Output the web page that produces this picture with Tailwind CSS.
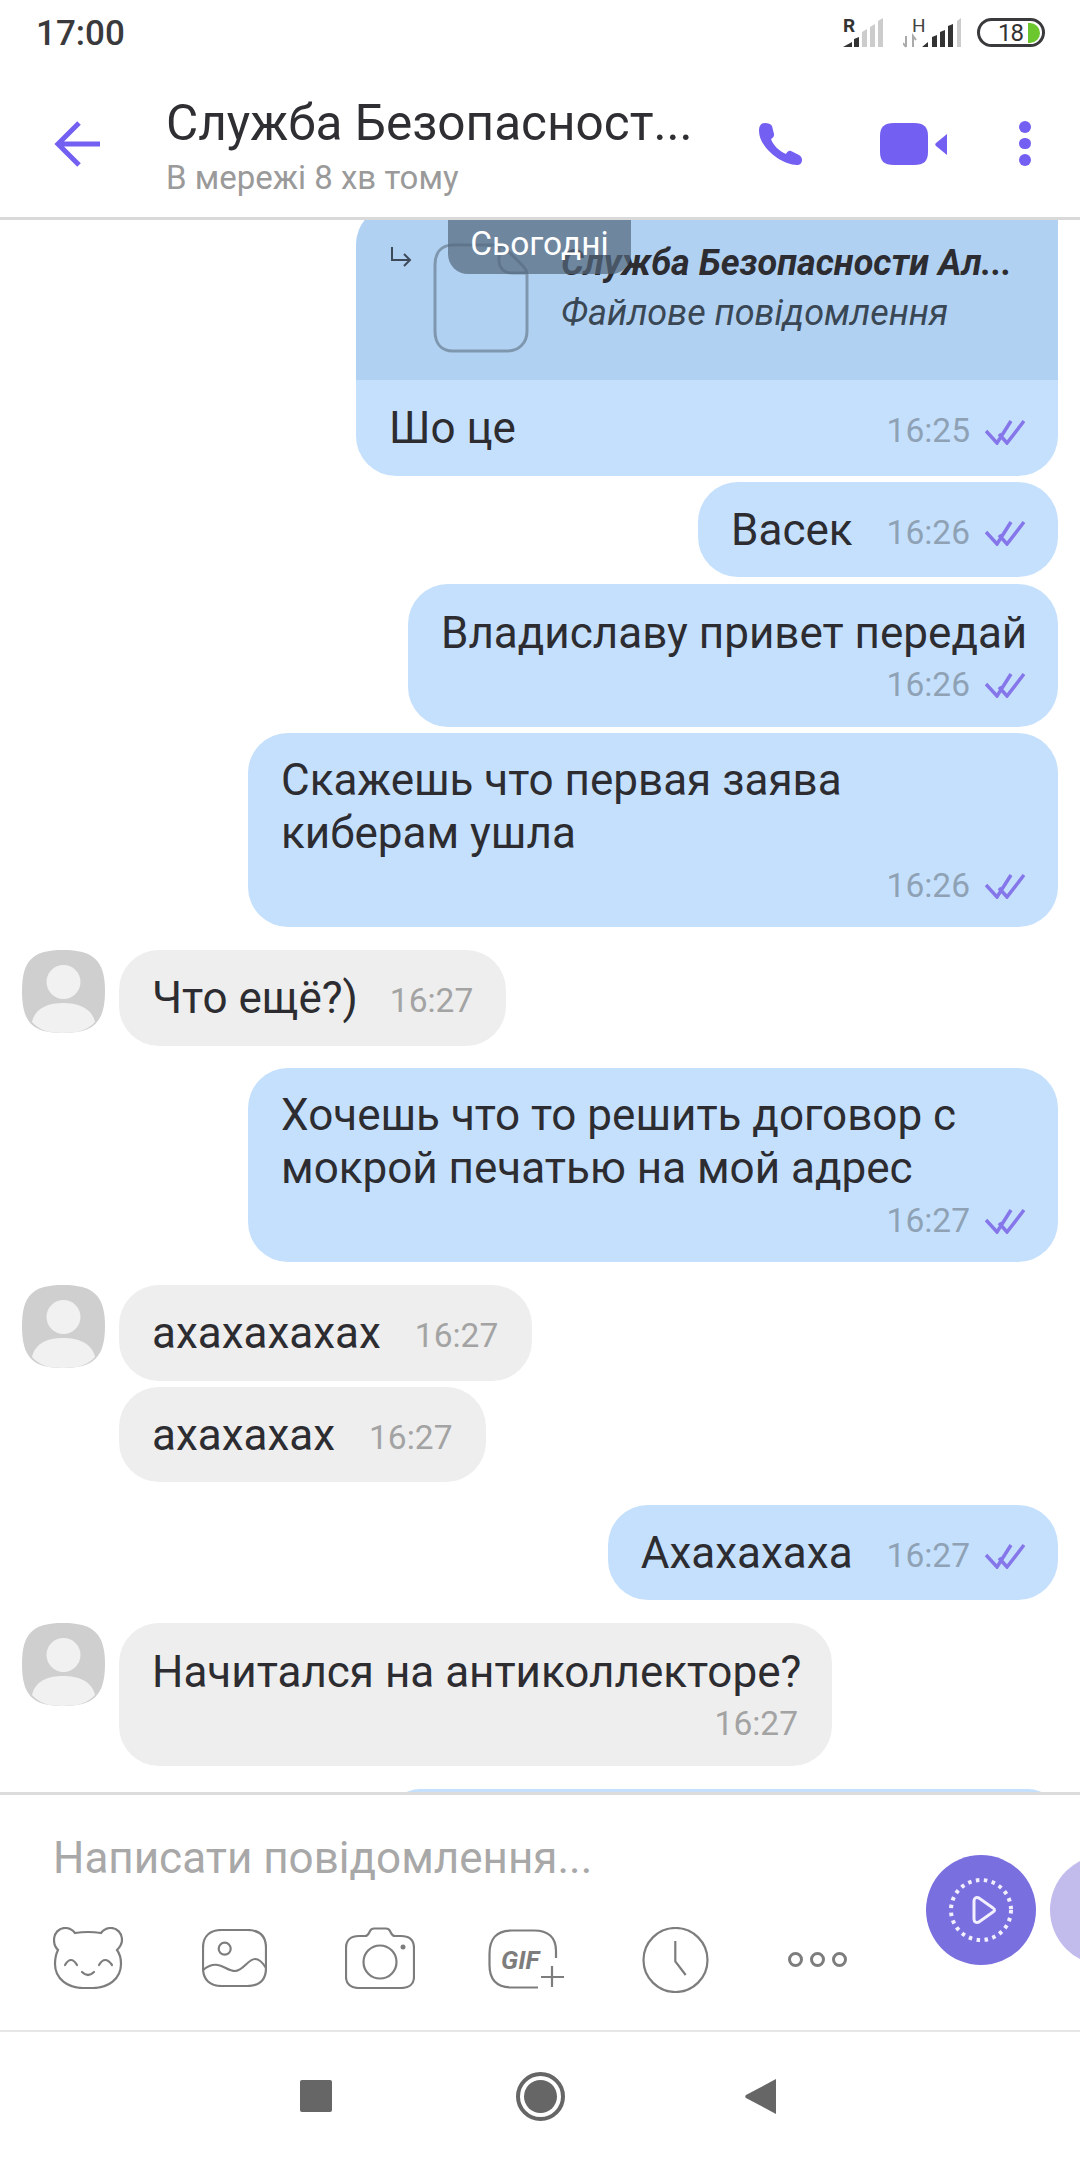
<!DOCTYPE html>
<html lang="uk">
  <head>
    <meta charset="UTF-8">
    <meta name="viewport" content="width=device-width, initial-scale=1.0">
    <title>Viber chat</title>
    <script src="https://cdn.jsdelivr.net/npm/@tailwindcss/browser@4"></script>
  </head>

  <body class="bg-white">
    <div class="relative w-[1080px] h-[2160px] flex flex-col overflow-hidden bg-white font-['Roboto',sans-serif] text-[#2c2c31]">

      <!-- status bar -->
      <div class="h-[60px] shrink-0 flex items-center justify-between pl-[36px] pr-[35px]">
        <span class="text-[35px] font-medium text-[#3a3a3d] leading-none mt-[7px]">17:00</span>
        <div class="flex items-center">
          <svg width="42" height="40" viewBox="0 -8 42 40">
            <text x="0" y="14" font-family="Roboto" font-weight="700" font-size="19" fill="#333">R</text>
            <path d="M0 29l9-5v5zM11 29v-8l5-2v10z" fill="#333"/>
            <path d="M19 29V14l5-3v18zM27 29V9l5-3v23zM35 29V3l5-3v29z" fill="#ccc"/>
          </svg>
          <svg class="ml-[18px]" width="60" height="40" viewBox="0 -8 60 40">
            <text x="9" y="14" font-family="Roboto" font-size="19" fill="#444">H</text>
            <path d="M3 18v11M0 25l3 4M10 29V18l3 4" stroke="#aaa" stroke-width="2" fill="none"/>
            <path d="M19 29l6-5v5zM29 29v-10l5-2v12zM37 29V14l5-2v17zM45 29V8l5-2v23z" fill="#333"/>
            <path d="M54 29V3l4-3v29z" fill="#ccc"/>
          </svg>
          <div class="ml-[14px] mt-[5px] w-[68px] h-[29px] rounded-full border-[3px] border-[#3a3a3d] flex items-center pl-[18px] gap-[2px]">
            <span class="text-[24px] leading-none text-[#333] tracking-[-1px]">18</span>
            <span class="w-[12px] h-[20px] rounded-r-full bg-[#6cc72f] ml-[3px]"></span>
          </div>
        </div>
      </div>

      <!-- chat header -->
      <header class="h-[160px] shrink-0 flex items-center border-b-[3px] border-[#d9d9d9] pt-[10px]">
        <button class="w-[166px] shrink-0 pl-[54px]">
          <svg class="block" width="48" height="46" viewBox="0 0 48 46" fill="none" stroke="#7360f2" stroke-width="5">
            <path d="M25 2L4 23l21 21M4 23h42"/>
          </svg>
        </button>
        <div class="w-[530px] shrink-0 mt-[5px]">
          <div class="text-[49.500px] leading-[54px] text-[#2f2f33] whitespace-nowrap">Служба Безопасност...</div>
          <div class="text-[33px] leading-[38px] text-[#9a9a9a] mt-[9px]">В мережі 8 хв тому</div>
        </div>
        <div class="flex items-center ml-[63px]">
          <svg width="43" height="42" viewBox="0 0 43 42" fill="#7360f2">
            <path d="M6 0C9 0 12 1 13 3L15 11C15.500 13 14 15 12 16C14 22 20 28 27 31C28 29 30 27 32 28L40 32C42 33 43 35 43 37C43 40 41 42 38 42C22 42 0 24 0 8C0 3 2 0 6 0z"/>
          </svg>
          <svg class="ml-[78px]" width="68" height="42" viewBox="0 0 68 42" fill="#7360f2">
            <path d="M14 0h20c10 0 14 4 14 13v16c0 9-4 13-14 13H14C4 42 0 38 0 29V13C0 4 4 0 14 0z"/>
            <path d="M67 11v21L56 23c-1-1-1-2 0-3z"/>
          </svg>
          <div class="ml-[71px] flex flex-col gap-[5px]">
            <span class="block w-[12px] h-[11.500px] rounded-full bg-[#7360f2]"></span>
            <span class="block w-[12px] h-[11.500px] rounded-full bg-[#7360f2]"></span>
            <span class="block w-[12px] h-[11.500px] rounded-full bg-[#7360f2]"></span>
          </div>
        </div>
      </header>

      <!-- messages -->
      <main class="relative h-[1572px] shrink-0 overflow-hidden">
        <div class="absolute top-0 left-[448px] w-[183px] h-[54px] rounded-b-[20px] bg-[#52667c]/70 text-white text-[33.500px] leading-[48px] text-center z-10">Сьогодні</div>

        <div class="flex flex-col items-end pr-[22px] -mt-[15px]">
          <div class="w-[702px] rounded-tl-[40px] rounded-tr-[14px] rounded-b-[40px] overflow-hidden bg-[#c5e0fd]">
            <div class="h-[175px] bg-[#b1d1f2] flex">
              <svg class="ml-[34px] mt-[41px]" width="22" height="22" viewBox="0 0 22 22" fill="none" stroke="#3d4a59" stroke-width="2">
                <path d="M2 1v13h18M14 8l6 6-6 6"/>
              </svg>
              <svg class="ml-[21px] mt-[38px]" width="96" height="110" viewBox="0 0 96 110" fill="none" stroke="#7e97ae" stroke-width="3">
                <path d="M20 2h44c4 0 6 1 9 4l17 17c3 3 4 5 4 9v56c0 12-8 20-20 20H20C8 108 2 100 2 88V22C2 10 8 2 20 2z"/>
                <path d="M66 3v14c0 8 5 13 13 13h14"/>
              </svg>
              <div class="ml-[32px] italic">
                <div class="mt-[38px] text-[36px] leading-[40px] font-bold whitespace-nowrap">Служба Безопасности Ал...</div>
                <div class="mt-[10px] text-[36px] leading-[40px] text-[#3a4754] whitespace-nowrap">Файлове повідомлення</div>
              </div>
            </div>
            <div class="h-[96px] flex items-center justify-between pl-[33px] pr-[33px]">
              <span class="text-[44px] leading-[54px]">Шо це</span>
              <span class="mt-[7px] flex items-center gap-[15px] text-[33.500px] text-[#8fa2b5]">16:25
                <svg width="40" height="26" viewBox="0 0 40 26" fill="none" stroke="#8576ea" stroke-width="3.500"><path d="M1 12l11 12L26 2M14 15l8 9L39 2"/></svg>
              </span>
            </div>
          </div>

          <div class="mt-[6px] h-[95px] rounded-[40px] bg-[#c5e0fd] flex items-center pl-[33px] pr-[33px]">
            <span class="text-[44px] leading-[54px]">Васек</span>
            <span class="mt-[7px] ml-[34px] flex items-center gap-[15px] text-[33.500px] text-[#8fa2b5]">16:26
              <svg width="40" height="26" viewBox="0 0 40 26" fill="none" stroke="#8576ea" stroke-width="3.500"><path d="M1 12l11 12L26 2M14 15l8 9L39 2"/></svg>
            </span>
          </div>

          <div class="mt-[7px] w-[650px] rounded-[40px] bg-[#c5e0fd] pt-[22px] pb-[20px] pl-[33px] pr-[33px]">
            <div class="text-[44px] leading-[54px] whitespace-nowrap">Владиславу привет передай</div>
            <div class="mt-[3px] h-[44px] flex items-center justify-end gap-[15px] text-[33.500px] text-[#8fa2b5]">16:26
              <svg width="40" height="26" viewBox="0 0 40 26" fill="none" stroke="#8576ea" stroke-width="3.500"><path d="M1 12l11 12L26 2M14 15l8 9L39 2"/></svg>
            </div>
          </div>

          <div class="mt-[6px] w-[810px] rounded-[40px] bg-[#c5e0fd] pt-[21px] pb-[19px] pl-[33px] pr-[33px]">
            <div class="text-[44px] leading-[53px] whitespace-nowrap">Скажешь что первая заява<br>киберам ушла</div>
            <div class="mt-[4px] h-[44px] flex items-center justify-end gap-[15px] text-[33.500px] text-[#8fa2b5]">16:26
              <svg width="40" height="26" viewBox="0 0 40 26" fill="none" stroke="#8576ea" stroke-width="3.500"><path d="M1 12l11 12L26 2M14 15l8 9L39 2"/></svg>
            </div>
          </div>
        </div>

        <div class="mt-[23px] flex items-start pl-[22px]">
          <svg class="shrink-0" width="83" height="83" viewBox="0 0 83 83">
            <path d="M41 0c30 0 42 10 42 41 0 32-12 42-42 42C11 83 0 73 0 41 0 10 11 0 41 0z" fill="#cfcfcf"/>
            <circle cx="41.500" cy="32" r="17" fill="#f1f1f1"/>
            <path d="M10 72c3-14 16-19 31-19s29 5 32 19c-7 8-17 11-32 11S17 80 10 72z" fill="#f1f1f1"/>
          </svg>
          <div class="ml-[14px] h-[96px] rounded-[40px] bg-[#eeeeee] flex items-center pl-[33px] pr-[33px]">
            <span class="text-[44px] leading-[54px]">Что ещё?)</span>
            <span class="mt-[7px] ml-[32px] text-[33.500px] text-[#a3a3a3]">16:27</span>
          </div>
        </div>

        <div class="mt-[22px] flex justify-end pr-[22px]">
          <div class="w-[810px] rounded-[40px] bg-[#c5e0fd] pt-[21px] pb-[19px] pl-[33px] pr-[33px]">
            <div class="text-[44px] leading-[53px] whitespace-nowrap">Хочешь что то решить договор с<br>мокрой печатью на мой адрес</div>
            <div class="mt-[4px] h-[44px] flex items-center justify-end gap-[15px] text-[33.500px] text-[#8fa2b5]">16:27
              <svg width="40" height="26" viewBox="0 0 40 26" fill="none" stroke="#8576ea" stroke-width="3.500"><path d="M1 12l11 12L26 2M14 15l8 9L39 2"/></svg>
            </div>
          </div>
        </div>

        <div class="mt-[23px] flex items-start pl-[22px]">
          <svg class="shrink-0" width="83" height="83" viewBox="0 0 83 83">
            <path d="M41 0c30 0 42 10 42 41 0 32-12 42-42 42C11 83 0 73 0 41 0 10 11 0 41 0z" fill="#cfcfcf"/>
            <circle cx="41.500" cy="32" r="17" fill="#f1f1f1"/>
            <path d="M10 72c3-14 16-19 31-19s29 5 32 19c-7 8-17 11-32 11S17 80 10 72z" fill="#f1f1f1"/>
          </svg>
          <div class="ml-[14px] flex flex-col items-start gap-[6px]">
            <div class="h-[96px] rounded-[40px] bg-[#eeeeee] flex items-center pl-[33px] pr-[34px]">
              <span class="text-[44px] leading-[54px]">ахахахахах</span>
              <span class="mt-[7px] ml-[34px] text-[33.500px] text-[#a3a3a3]">16:27</span>
            </div>
            <div class="h-[95px] rounded-[40px] bg-[#eeeeee] flex items-center pl-[33px] pr-[34px]">
              <span class="text-[44px] leading-[54px]">ахахахах</span>
              <span class="mt-[7px] ml-[34px] text-[33.500px] text-[#a3a3a3]">16:27</span>
            </div>
          </div>
        </div>

        <div class="mt-[23px] flex justify-end pr-[22px]">
          <div class="h-[95px] rounded-[40px] bg-[#c5e0fd] flex items-center pl-[33px] pr-[33px]">
            <span class="text-[44px] leading-[54px]">Ахахахаха</span>
            <span class="mt-[7px] ml-[34px] flex items-center gap-[15px] text-[33.500px] text-[#8fa2b5]">16:27
              <svg width="40" height="26" viewBox="0 0 40 26" fill="none" stroke="#8576ea" stroke-width="3.500"><path d="M1 12l11 12L26 2M14 15l8 9L39 2"/></svg>
            </span>
          </div>
        </div>

        <div class="mt-[23px] flex items-start pl-[22px]">
          <svg class="shrink-0" width="83" height="83" viewBox="0 0 83 83">
            <path d="M41 0c30 0 42 10 42 41 0 32-12 42-42 42C11 83 0 73 0 41 0 10 11 0 41 0z" fill="#cfcfcf"/>
            <circle cx="41.500" cy="32" r="17" fill="#f1f1f1"/>
            <path d="M10 72c3-14 16-19 31-19s29 5 32 19c-7 8-17 11-32 11S17 80 10 72z" fill="#f1f1f1"/>
          </svg>
          <div class="ml-[14px] w-[713px] rounded-[40px] bg-[#eeeeee] pt-[22px] pb-[20px] pl-[33px] pr-[34px]">
            <div class="text-[44px] leading-[54px] whitespace-nowrap">Начитался на антиколлекторе?</div>
            <div class="mt-[3px] h-[44px] flex items-center justify-end text-[33.500px] text-[#a3a3a3]">16:27</div>
          </div>
        </div>

        <div class="mt-[23px] ml-[390px] w-[668px] h-[60px] rounded-[40px] bg-[#c5e0fd]"></div>
      </main>

      <!-- composer -->
      <section class="h-[238px] shrink-0 border-t-[3px] border-[#dcdcdc] flex">
        <div class="w-[926px] shrink-0 pl-[53px]">
          <div class="mt-[36px] text-[44px] leading-[54px] text-[#a8a8a8]">Написати повідомлення...</div>
          <div class="mt-[42px] flex items-start text-[#7d7d7d]">
            <svg width="70" height="62" viewBox="0 0 70 62" fill="none" stroke="currentColor" stroke-width="2.200">
              <path d="M22 6Q35 4 48 6C51 2 55 1 58 1C64 1 69 6 69 13C69 17 67 20 64 23C67 27 68 32 68 37C68 52 55 61 40 61H30C15 61 2 52 2 37C2 32 3 27 5 23C2 20 1 17 1 13C1 6 6 1 12 1C15 1 19 2 22 6z"/>
              <path d="M12 38Q18 28 24 38M46 38Q52 28 59 38M29 45Q35 51 41 45" stroke-linecap="round"/>
            </svg>
            <svg class="ml-[79px] mt-[2px]" width="65" height="58" viewBox="0 0 65 58" fill="none" stroke="currentColor" stroke-width="2.200">
              <path d="M20 1h25c12 0 19 6 19 18v20c0 12-7 18-19 18H20C8 57 1 51 1 39V19C1 7 8 1 20 1z"/>
              <circle cx="22.700" cy="19.700" r="6"/>
              <path d="M1 41C6 37 11 35 16 36C22 37 27 42 33 42C41 42 46 30 53 30C58 30 61 34 64 39"/>
            </svg>
            <svg class="ml-[78px]" width="70" height="62" viewBox="0 0 70 62" fill="none" stroke="currentColor" stroke-width="2.200">
              <path d="M14 9H20C22 9 23 8 24 6L25 4C26 2 27 1.500 29 1.500H41C43 1.500 44 2 45 4L46 6C47 8 48 9 50 9H56C64 9 69 13 69 21V50C69 57 64 61 56 61H14C6 61 1 57 1 50V21C1 13 6 9 14 9z"/>
              <circle cx="35" cy="35" r="16.500"/>
              <circle cx="58" cy="20" r="2.500" fill="currentColor" stroke="none"/>
            </svg>
            <svg class="ml-[73px] mt-[2px]" width="77" height="60" viewBox="0 0 77 60" fill="none" stroke="currentColor" stroke-width="2.200">
              <path d="M68 29V22C68 8 60 1.500 46 1.500H24C8 1.500 1.500 10 1.500 25V36C1.500 50 8 58.500 24 58.500H50"/>
              <text x="13" y="40" font-family="Roboto" font-style="italic" font-weight="700" font-size="26" fill="currentColor" stroke="none">GIF</text>
              <path d="M53 48h23M64 37v21"/>
            </svg>
            <svg class="ml-[77px]" width="67" height="66" viewBox="0 0 67 66" fill="none" stroke="currentColor" stroke-width="2.200">
              <circle cx="33.500" cy="33" r="32"/>
              <path d="M33.300 14v20.300L43.700 48"/>
            </svg>
            <div class="ml-[79px] flex gap-[7px] mt-[25px]">
              <span class="block w-[15px] h-[15px] rounded-full border-[3px] border-[#7d7d7d]"></span>
              <span class="block w-[15px] h-[15px] rounded-full border-[3px] border-[#7d7d7d]"></span>
              <span class="block w-[15px] h-[15px] rounded-full border-[3px] border-[#7d7d7d]"></span>
            </div>
          </div>
        </div>
        <div class="flex items-start gap-[14px] pt-[60px]">
          <div class="w-[110px] h-[110px] shrink-0 rounded-full bg-[#7a6fdf] flex items-center justify-center">
            <svg width="66" height="66" viewBox="0 0 66 66" fill="none" stroke="#f2f0ff">
              <circle cx="33" cy="33" r="30" stroke-width="4" stroke-dasharray="3.500 4.500"/>
              <path d="M26 24c0-3 2-4 5-3l14 10c2 1 2 3 0 4l-14 10c-3 1-5 0-5-3z" stroke-width="3"/>
            </svg>
          </div>
          <div class="w-[110px] h-[110px] shrink-0 rounded-full bg-[#c2bcec]"></div>
        </div>
      </section>

      <!-- android nav -->
      <nav class="flex-1 border-t-2 border-[#e6e6e6] relative flex items-center">
        <div class="ml-[300px] w-[32px] h-[32px] rounded-[2px] bg-[#666666]"></div>
        <div class="ml-[184px] w-[49px] h-[49px] rounded-full border-[4px] border-[#666666] flex items-center justify-center">
          <span class="block w-[33px] h-[33px] rounded-full bg-[#666666]"></span>
        </div>
        <svg class="ml-[180px]" width="32" height="37" viewBox="0 0 32 37"><path d="M31 1v35L1 20c-1-1-1-2 0-3z" fill="#666666"/></svg>
      </nav>
    </div>
  </body>
</html>
